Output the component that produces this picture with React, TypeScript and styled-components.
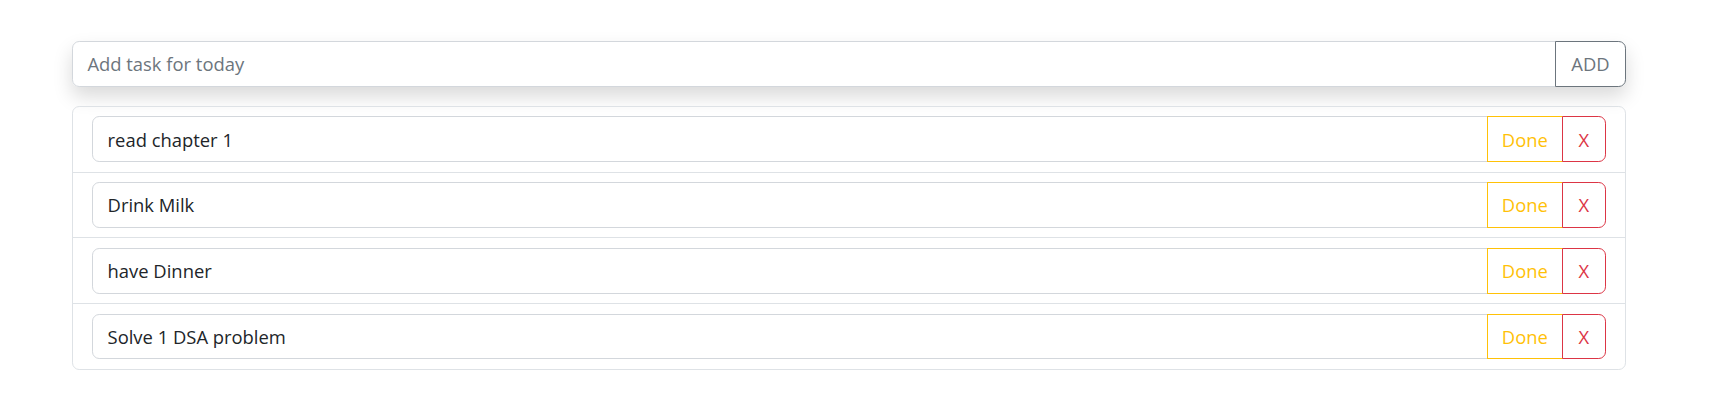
import React from "react";
import styled, { createGlobalStyle } from "styled-components";

const tasks = ["read chapter 1", "Drink Milk", "have Dinner", "Solve 1 DSA problem"];

const GlobalStyle = createGlobalStyle`
  html, body {
    margin: 0;
    padding: 0;
    background: #fff;
  }
  body {
    font-family: "Segoe UI", "Open Sans", "Noto Sans", sans-serif;
    color: #212529;
  }
  * {
    box-sizing: border-box;
  }
`;

const Page = styled.div`
  width: 1554px;
  padding-top: 41px;
  margin-left: 72px;
`;

const AddGroup = styled.div`
  display: flex;
  height: 45.6px;
  border-radius: 7.2px;
  box-shadow: 0 9.6px 19.2px rgba(0, 0, 0, 0.15);
`;

const TextField = styled.input`
  flex: 1;
  min-width: 0;
  height: 100%;
  padding: 0 14.4px;
  border: 1px solid #d3d7dc;
  border-radius: 7.2px 0 0 7.2px;
  font-family: inherit;
  font-size: 18.4px;
  color: #212529;
  background: #fff;
  outline: none;

  &::placeholder {
    color: #6c757d;
  }
`;

const Button = styled.button<{ $tone: string; $width: number; $last?: boolean }>`
  flex: none;
  width: ${({ $width }) => $width}px;
  height: 100%;
  margin-left: -1px;
  padding: 0;
  border: 1px solid ${({ $tone }) => $tone};
  border-radius: ${({ $last }) => ($last ? "0 7.2px 7.2px 0" : "0")};
  background: #fff;
  color: ${({ $tone }) => $tone};
  font-family: inherit;
  font-size: 18.4px;
  position: relative;
  cursor: pointer;
`;

const TaskList = styled.ul`
  list-style: none;
  margin: 19.2px 0 0;
  padding: 0;
  border: 1px solid #dee2e6;
  border-radius: 7.2px;
`;

const TaskRow = styled.li`
  padding: 9.6px 19.2px;

  & + & {
    border-top: 1px solid #dee2e6;
  }
`;

const TaskGroup = styled.div`
  display: flex;
  height: 45.6px;
`;

export default function App() {
  return (
    <>
      <GlobalStyle />
      <Page>
        <AddGroup>
          <TextField placeholder="Add task for today" />
          <Button $tone="#6c757d" $width={71} $last>
            ADD
          </Button>
        </AddGroup>
        <TaskList>
          {tasks.map((task) => (
            <TaskRow key={task}>
              <TaskGroup>
                <TextField readOnly value={task} />
                <Button $tone="#ffc107" $width={76}>
                  Done
                </Button>
                <Button $tone="#dc3545" $width={44} $last>
                  X
                </Button>
              </TaskGroup>
            </TaskRow>
          ))}
        </TaskList>
      </Page>
    </>
  );
}
